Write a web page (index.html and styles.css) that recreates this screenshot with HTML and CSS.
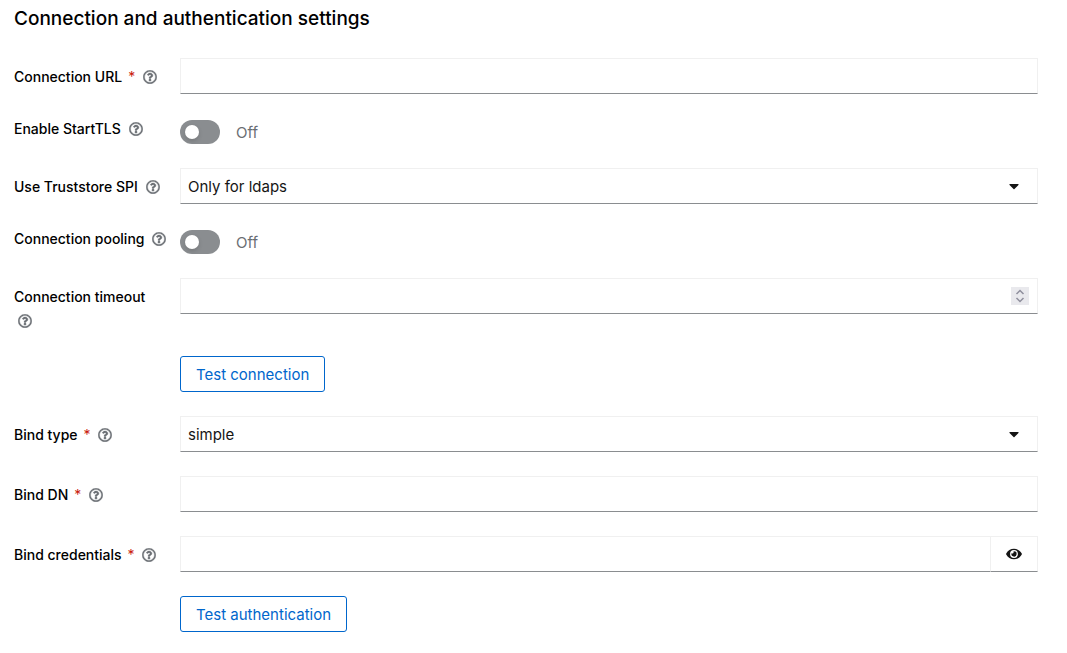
FILE: index.html
```html
<!DOCTYPE html>
<html lang="en">
<head>
  <meta charset="UTF-8"/>
  <meta name="viewport" content="width=device-width, initial-scale=1.0"/>
  <title>Connection and authentication settings</title>
  <link rel="stylesheet" href="styles.css">
</head>
<body>
  <svg class="sprite" aria-hidden="true">
    <symbol id="help" viewBox="0 0 512 512">
      <path d="M256 8C119.043 8 8 119.083 8 256c0 136.997 111.043 248 248 248s248-111.003 248-248C504 119.083 392.957 8 256 8zm0 448c-110.532 0-200-89.431-200-200 0-110.495 89.472-200 200-200 110.491 0 200 89.471 200 200 0 110.53-89.431 200-200 200zm107.244-255.2c0 67.052-72.421 68.084-72.421 92.863V300c0 6.627-5.373 12-12 12h-45.647c-6.627 0-12-5.373-12-12v-8.659c0-35.745 27.1-50.034 47.579-61.516 17.561-9.845 28.324-16.541 28.324-29.579 0-17.246-21.999-28.693-39.784-28.693-23.189 0-33.894 10.977-48.942 29.969-4.057 5.12-11.46 6.071-16.666 2.124l-27.824-21.098c-5.107-3.872-6.251-11.066-2.644-16.363C184.846 131.491 214.94 112 261.794 112c49.071 0 101.45 38.304 101.45 88.8zM298 368c0 23.159-18.841 42-42 42s-42-18.841-42-42 18.841-42 42-42 42 18.841 42 42z"/>
    </symbol>
    <symbol id="caret" viewBox="0 0 320 512">
      <path d="M31.3 192h257.3c17.8 0 26.7 21.5 14.1 34.1L174.1 354.8c-7.8 7.8-20.5 7.8-28.3 0L17.2 226.1C4.6 213.5 13.5 192 31.3 192z"/>
    </symbol>
  </svg>

  <h1>Connection and authentication settings</h1>

  <form class="form">
    <div class="row">
      <div class="caption">
        <label for="url">Connection URL<span class="required">*</span></label>
        <button class="help" type="button" aria-label="Help for Connection URL"><svg><use href="#help"/></svg></button>
      </div>
      <input class="field" id="url" type="text" required/>
    </div>

    <div class="row row-switch">
      <div class="caption">
        <label for="startTls">Enable StartTLS</label>
        <button class="help" type="button" aria-label="Help for Enable StartTLS"><svg><use href="#help"/></svg></button>
      </div>
      <div class="toggle">
        <input class="switch" id="startTls" type="checkbox" role="switch"/>
        <label for="startTls">Off</label>
      </div>
    </div>

    <div class="row">
      <div class="caption">
        <label for="truststore">Use Truststore SPI</label>
        <button class="help" type="button" aria-label="Help for Use Truststore SPI"><svg><use href="#help"/></svg></button>
      </div>
      <div class="control">
        <select class="field" id="truststore">
          <option>Only for ldaps</option>
        </select>
        <svg class="caret"><use href="#caret"/></svg>
      </div>
    </div>

    <div class="row row-switch">
      <div class="caption">
        <label for="pooling">Connection pooling</label>
        <button class="help" type="button" aria-label="Help for Connection pooling"><svg><use href="#help"/></svg></button>
      </div>
      <div class="toggle">
        <input class="switch" id="pooling" type="checkbox" role="switch"/>
        <label for="pooling">Off</label>
      </div>
    </div>

    <div class="row">
      <div class="caption">
        <label for="timeout">Connection timeout</label>
        <button class="help" type="button" aria-label="Help for Connection timeout"><svg><use href="#help"/></svg></button>
      </div>
      <div class="control">
        <input class="field" id="timeout" type="number" min="0"/>
        <svg class="spinner" viewBox="0 0 18 18"><path d="M5.5 7 9 3.5 12.5 7M5.5 11 9 14.5 12.5 11"/></svg>
      </div>
    </div>

    <div class="row">
      <button class="btn" type="button">Test connection</button>
    </div>

    <div class="row">
      <div class="caption">
        <label for="bindType">Bind type<span class="required">*</span></label>
        <button class="help" type="button" aria-label="Help for Bind type"><svg><use href="#help"/></svg></button>
      </div>
      <div class="control">
        <select class="field" id="bindType" required>
          <option>simple</option>
        </select>
        <svg class="caret"><use href="#caret"/></svg>
      </div>
    </div>

    <div class="row">
      <div class="caption">
        <label for="bindDn">Bind DN<span class="required">*</span></label>
        <button class="help" type="button" aria-label="Help for Bind DN"><svg><use href="#help"/></svg></button>
      </div>
      <input class="field" id="bindDn" type="text" required/>
    </div>

    <div class="row">
      <div class="caption">
        <label for="credentials">Bind credentials<span class="required">*</span></label>
        <button class="help" type="button" aria-label="Help for Bind credentials"><svg><use href="#help"/></svg></button>
      </div>
      <div class="group">
        <input class="field" id="credentials" type="password" required/>
        <button class="reveal" type="button" aria-label="Show password">
          <svg viewBox="0 0 576 512"><path d="M572.52 241.4C518.29 135.59 410.93 64 288 64S57.68 135.64 3.48 241.41a32.35 32.35 0 0 0 0 29.19C57.71 376.41 165.07 448 288 448s230.32-71.64 284.52-177.41a32.35 32.35 0 0 0 0-29.19zM288 400a144 144 0 1 1 144-144 143.93 143.93 0 0 1-144 144zm0-240a95.31 95.31 0 0 0-25.31 3.79 47.85 47.85 0 0 1-66.9 66.9A95.78 95.78 0 1 0 288 160z"/></svg>
        </button>
      </div>
    </div>

    <div class="row">
      <button class="btn" type="button">Test authentication</button>
    </div>
  </form>
</body>
</html>
```
FILE: styles.css
```css
* { box-sizing:border-box; }
body { margin:0; padding:6px 29px 21px 14px; background:#fff; color:#151515; font-family:Inter, "Open Sans", sans-serif; font-size:15px; line-height:24px; }
button, input, select { margin:0; font:inherit; color:inherit; }
.sprite { position:absolute; width:0; height:0; }
svg { display:block; fill:currentColor; }
h1 { margin:0 0 26px; font-size:19px; font-weight:500; line-height:26px; color:#000; }

.form { display:grid; gap:24px; }
.row { display:grid; grid-template-columns:150px minmax(0, 1fr); column-gap:16px; align-items:start; }
.caption { margin-bottom:-1px; padding-top:7px; font-size:14px; font-weight:500; color:#000; }
.row-switch .caption { padding-top:0; line-height:22px; white-space:nowrap; }
.required { margin-left:6px; font-weight:400; color:#c9190b; }
.help { display:inline-block; margin-left:4px; padding:0; border:0; background:none; color:#6a6e73; vertical-align:-2px; cursor:pointer; }
.help svg { width:14px; height:14px; stroke:currentColor; stroke-width:14; overflow:visible; }

.field { display:block; width:100%; height:36px; padding:1px 7px 0; border:1px solid #f0f0f0; border-bottom-color:#8a8d90; border-radius:0; background:#fff; }
select.field { appearance:none; padding-right:40px; }
.control { position:relative; }
.caret { position:absolute; top:10px; right:19px; width:10px; height:16px; pointer-events:none; }
.spinner { position:absolute; top:9px; right:9px; width:18px; height:18px; background:#e9e9ed; fill:none; stroke:#8f8f9d; stroke-width:1.5; pointer-events:none; }
input[type="number"] { appearance:textfield; }

.toggle { display:flex; align-items:center; gap:16px; padding-top:2px; color:#6a6e73; }
.toggle label { height:24px; line-height:26px; }
.switch { appearance:none; width:40px; height:24px; padding:5px; border-radius:12px; background:#8a8d90; cursor:pointer; }
.switch::before { content:""; display:block; width:14px; height:14px; border-radius:50%; background:#fff; box-shadow:0 2px 4px rgba(0, 0, 0, .15); }
.switch:checked { background:#06c; }
.switch:checked::before { margin-left:16px; }

.btn { grid-column:2; justify-self:start; height:36px; padding:1px 15px 0; border:1px solid #06c; border-radius:3px; background:none; color:#06c; cursor:pointer; }

.group { display:flex; }
.group .field { flex:1; border-right:0; }
.reveal { display:grid; place-items:center; width:48px; height:36px; padding:0; border:1px solid #f0f0f0; border-bottom-color:#8a8d90; background:none; cursor:pointer; }
.reveal svg { width:16px; height:14px; }
```
